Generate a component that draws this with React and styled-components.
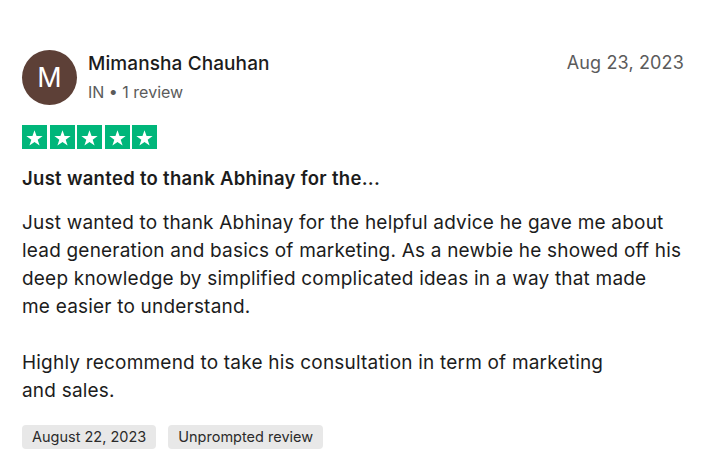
import React from 'react';
import styled, { createGlobalStyle } from 'styled-components';

const GlobalStyle = createGlobalStyle`
  body {
    margin: 0;
    background: #ffffff;
    font-family: Inter, "Liberation Sans", sans-serif;
    color: #1c1c1c;
  }
`;

const Card = styled.article`
  width: 722px;
  box-sizing: border-box;
  padding: 50px 38px 0 22px;
`;

const Header = styled.header`
  display: flex;
  align-items: flex-start;
  gap: 11px;
`;

const Avatar = styled.div`
  width: 55px;
  height: 55px;
  border-radius: 50%;
  background: #5d4037;
  color: #ffffff;
  display: flex;
  align-items: center;
  justify-content: center;
  font-size: 27px;
  flex-shrink: 0;
`;

const Consumer = styled.div`
  display: flex;
  flex-direction: column;
  flex: 1;
  padding-top: 2px;
`;

const Name = styled.span`
  font-size: 19px;
  font-weight: 500;
  letter-spacing: 0.1px;
  line-height: 24px;
`;

const Meta = styled.span`
  font-size: 16px;
  line-height: 24px;
  margin-top: 4px;
  color: #5b5b5b;
`;

const PostedAt = styled.time`
  font-size: 18px;
  letter-spacing: 0.15px;
  line-height: 24px;
  color: #5b5b5b;
  padding-top: 1px;
`;

const Stars = styled.div`
  display: flex;
  gap: 2.5px;
  margin-top: 20px;
`;

const Star = styled.div`
  width: 25px;
  height: 24px;
  background: #00b67a;
  display: flex;
  align-items: center;
  justify-content: center;
`;

const Title = styled.h2`
  margin: 17px 0 0;
  font-size: 18.5px;
  font-weight: 600;
  letter-spacing: 0.3px;
  line-height: 24px;
`;

const Body = styled.p`
  margin: 19px -20px 0 0;
  font-size: 19px;
  letter-spacing: 0.2px;
  line-height: 28px;
  white-space: pre-line;
`;

const Tags = styled.div`
  display: flex;
  gap: 12px;
  margin-top: 20px;
`;

const Tag = styled.span`
  background: #e8e8e8;
  border-radius: 4px;
  padding: 0 10px;
  height: 24px;
  line-height: 24px;
  font-size: 14.5px;
  color: #2b2b2b;
`;

const StarIcon = () => (
  <svg width="17" height="17" viewBox="0 0 24 24">
    <path
      fill="#fff"
      d="M12 1.8l2.9 8.1h8.6l-7 5.1 2.7 8.2L12 18.2l-7.2 5 2.7-8.2-7-5.1h8.6z"
    />
  </svg>
);

const text = `Just wanted to thank Abhinay for the helpful advice he gave me about
lead generation and basics of marketing. As a newbie he showed off his
deep knowledge by simplified complicated ideas in a way that made
me easier to understand.

Highly recommend to take his consultation in term of marketing
and sales.`;

export default function App() {
  return (
    <>
      <GlobalStyle />
      <Card>
        <Header>
          <Avatar>M</Avatar>
          <Consumer>
            <Name>Mimansha Chauhan</Name>
            <Meta>IN • 1 review</Meta>
          </Consumer>
          <PostedAt>Aug 23, 2023</PostedAt>
        </Header>
        <Stars>
          {[0, 1, 2, 3, 4].map(i => (
            <Star key={i}>
              <StarIcon />
            </Star>
          ))}
        </Stars>
        <Title>Just wanted to thank Abhinay for the...</Title>
        <Body>{text}</Body>
        <Tags>
          <Tag>August 22, 2023</Tag>
          <Tag>Unprompted review</Tag>
        </Tags>
      </Card>
    </>
  );
}
